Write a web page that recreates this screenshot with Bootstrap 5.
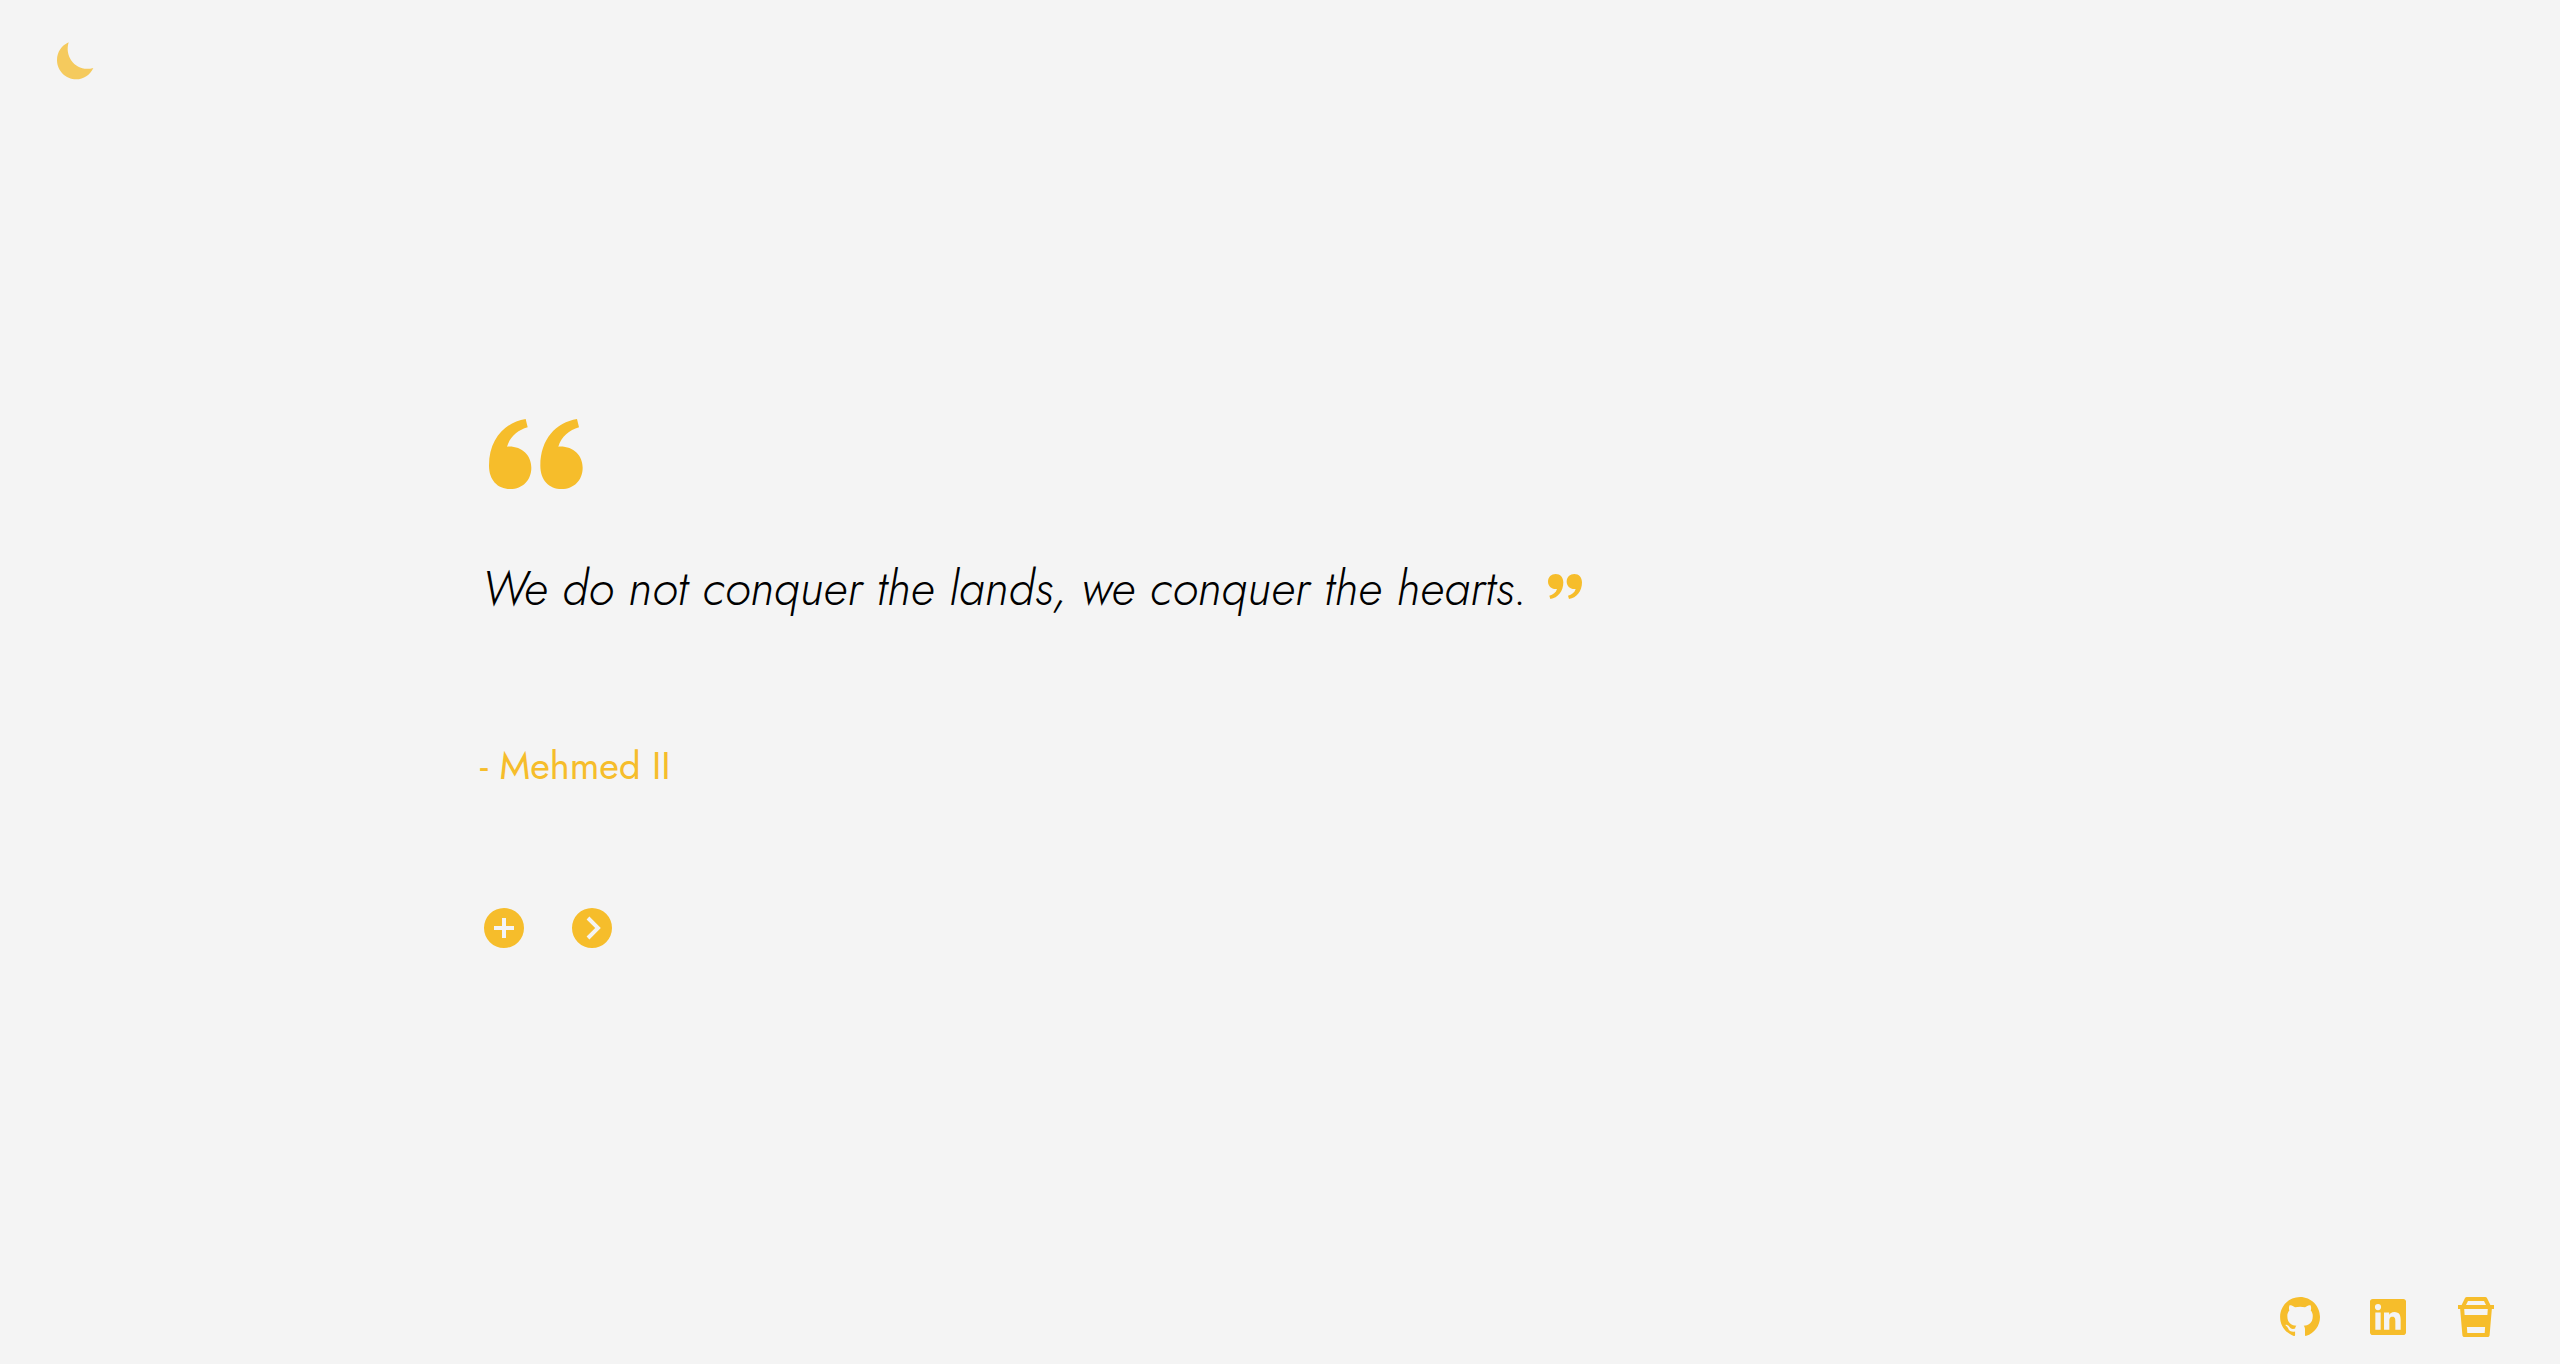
<!DOCTYPE html>
<html lang="en">
<head>
<meta charset="utf-8">
<meta name="viewport" content="width=device-width, initial-scale=1">
<title>Quotes</title>
<link href="https://cdn.jsdelivr.net/npm/bootstrap@5.3.0/dist/css/bootstrap.min.css" rel="stylesheet">
<style>
body { background: #f4f4f4; color: #000; font-family: Jost, Lato, sans-serif; }
svg { display: block; fill: currentColor; }
.gold, .gold:hover { color: #f6bd2b; }
.plain-btn { background: none; border: 0; padding: 0; }
.top-bar { padding: 37px 52px 11px; }
.bottom-bar { padding: 25px 60px 23px; gap: 40px; }
.moon { opacity: .75; }
.quote-box { max-width: 1600px; }
.quote-text { font-size: 48px; line-height: 72px; font-weight: 270; font-style: italic; margin: 45px 0 0 2px; gap: 20px; }
.quote-text svg { margin-bottom: 2px; }
.quote-author { font-size: 38px; line-height: 56px; font-weight: 440; margin: 113px 0 110px; }
.actions { gap: 40px; }
</style>
</head>
<body class="d-flex flex-column min-vh-100">
<header class="top-bar d-flex">
  <button type="button" class="plain-btn gold moon" aria-label="Dark mode">
    <svg width="48" height="48" viewBox="0 0 144 144"><path d="M50 16C36 62 74 107 124 93C114 114 95 127 73 127C41 127 15 101 15 69C15 46 28 26 50 16Z"/></svg>
  </button>
</header>
<main class="flex-grow-1 d-flex flex-column justify-content-center">
  <div class="quote-box container-fluid p-0">
    <svg class="gold" width="112" height="96" viewBox="30 36 336 288" aria-hidden="true"><path id="mark-open" d="M167 57L173 82C144 90 120 110 111 140C154 137 184 165 184 203C184 240 158 267 121 267C83 267 57 240 57 197C57 118 104 67 167 57Z"/><use href="#mark-open" x="154"/></svg>
    <blockquote class="quote-text d-flex align-items-center flex-wrap flex-lg-nowrap mb-0">
      <span>We do not conquer the lands, we conquer the hearts.</span>
      <svg class="gold flex-shrink-0" width="36" height="32" viewBox="315 63 108 96" aria-hidden="true"><path id="mark-close" d="M341 69C355 69 364 79 364 94C364 121 348 141 325 144L322 134C333 131 342 125 345 114C329 116 318 105 318 92C318 78 328 69 341 69Z"/><use href="#mark-close" x="56"/></svg>
    </blockquote>
    <p class="quote-author gold">- Mehmed II</p>
    <div class="actions d-flex">
      <button type="button" class="plain-btn gold" aria-label="Add quote">
        <svg width="48" height="48" viewBox="0 0 24 24"><path fill-rule="evenodd" d="M12 2a10 10 0 1 0 0 20 10 10 0 0 0 0-20zm5 11h-4v4h-2v-4H7v-2h4V7h2v4h4z"/></svg>
      </button>
      <button type="button" class="plain-btn gold" aria-label="Next quote">
        <svg width="48" height="48" viewBox="0 0 24 24"><path fill-rule="evenodd" d="M12 2a10 10 0 1 0 0 20 10 10 0 0 0 0-20zm-1.300 15.700-1.400-1.400 4.300-4.300-4.300-4.300 1.400-1.400L16.400 12z"/></svg>
      </button>
    </div>
  </div>
</main>
<footer class="bottom-bar d-flex justify-content-end">
  <a href="#" class="gold" aria-label="GitHub"><svg width="48" height="48" viewBox="0 0 24 24"><path d="M12.026 2c-5.509 0-9.974 4.465-9.974 9.974 0 4.406 2.857 8.145 6.821 9.465.499.09.679-.217.679-.481 0-.237-.008-.865-.011-1.696-2.775.602-3.361-1.338-3.361-1.338-.452-1.152-1.107-1.459-1.107-1.459-.905-.619.069-.605.069-.605 1.002.07 1.527 1.028 1.527 1.028.89 1.524 2.336 1.084 2.902.829.091-.645.351-1.085.635-1.334-2.214-.251-4.542-1.107-4.542-4.93 0-1.087.389-1.979 1.024-2.675-.101-.253-.446-1.268.099-2.640 0 0 .837-.269 2.742 1.021a9.582 9.582 0 0 1 2.496-.336 9.554 9.554 0 0 1 2.496.336c1.906-1.291 2.742-1.021 2.742-1.021.545 1.372.203 2.387.099 2.640.640.696 1.024 1.587 1.024 2.675 0 3.833-2.330 4.675-4.552 4.922.355.308.675.916.675 1.846 0 1.334-.012 2.410-.012 2.737 0 .267.178.577.687.479C19.146 20.115 22 16.379 22 11.974 22 6.465 17.535 2 12.026 2z"/></svg></a>
  <a href="#" class="gold" aria-label="LinkedIn"><svg width="48" height="48" viewBox="0 0 24 24"><path d="M18.335 18.339H15.670v-4.177c0-.996-.020-2.278-1.390-2.278-1.389 0-1.601 1.084-1.601 2.205v4.250h-2.666V9.750h2.560v1.170h.035c.358-.674 1.228-1.387 2.528-1.387 2.700 0 3.200 1.778 3.200 4.091v4.715zM7.003 8.575a1.546 1.546 0 0 1-1.548-1.549 1.548 1.548 0 1 1 1.547 1.549zm1.336 9.764H5.666V9.750H8.340v8.589zM19.670 3H4.329C3.593 3 3 3.580 3 4.297v15.406C3 20.420 3.594 21 4.328 21h15.338C20.400 21 21 20.420 21 19.703V4.297C21 3.580 20.400 3 19.666 3h.003z"/></svg></a>
  <a href="#" class="gold" aria-label="Buy me a coffee"><svg width="48" height="48" viewBox="0 0 24 24"><path fill-rule="evenodd" d="M7.400 2h9.200c.380 0 .720.210.890.550L19.200 6H21v2h-1.080l-1.120 13.070c-.040.520-.470.930-1 .930H6.200c-.530 0-.960-.410-1-.930L4.080 8H3V6h1.800l1.710-3.450c.170-.340.510-.550.890-.550zM8 4L7 6h10l-1-2zM6.100 8l.210 3h11.380l.210-3zM7.450 17l.200 3h8.700l.200-3z"/></svg></a>
</footer>
<script src="https://cdn.jsdelivr.net/npm/bootstrap@5.3.0/dist/js/bootstrap.bundle.min.js"></script>
</body>
</html>
